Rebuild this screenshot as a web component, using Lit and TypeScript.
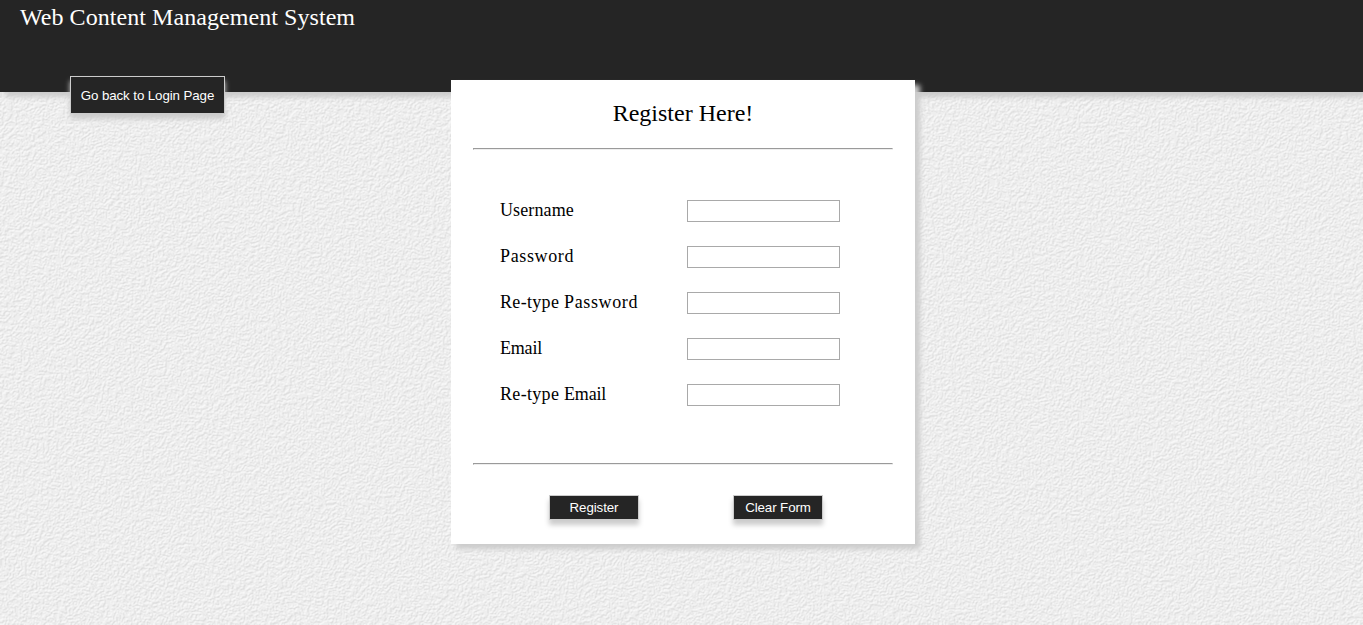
import { LitElement, html, css, nothing } from "lit";
import { customElement } from "lit/decorators.js";

const FIELDS = [
  { prefix: "", name: "Username", kind: "username", type: "text" },
  { prefix: "", name: "Password", kind: "password", type: "password" },
  { prefix: "Re-type ", name: "Password", kind: "password", type: "password" },
  { prefix: "", name: "Email", kind: "email", type: "text" },
  { prefix: "Re-type ", name: "Email", kind: "email", type: "text" },
];

@customElement("app-root")
export class AppRoot extends LitElement {
  static styles = css`
    :host {
      display: block;
      position: relative;
      height: 100vh;
      overflow: hidden;
      background: #eeeeee;
      color: #000;
      font-family: "Liberation Serif", "Times New Roman", serif;
      font-size: 18px;
    }
    .paper {
      position: absolute;
      inset: 0;
      width: 100%;
      height: 100%;
    }
    .page {
      position: relative;
      display: flex;
      flex-direction: column;
    }
    header {
      box-sizing: border-box;
      height: 92px;
      padding: 4px 20px 0;
      background: #252525;
      box-shadow: 5px 5px 5px #ccc;
      display: flex;
      flex-direction: column;
      align-items: flex-start;
    }
    h1, h2 {
      margin: 0;
      font-weight: normal;
      font-size: 24px;
      line-height: 27px;
      white-space: nowrap;
    }
    h1 {
      color: #fff;
      letter-spacing: 0.06px;
    }
    button {
      box-sizing: border-box;
      margin: 0;
      padding: 0;
      border: 1px solid #ccc;
      border-radius: 0;
      background: #252525;
      color: #fff;
      font-family: "Liberation Sans", Arial, sans-serif;
      font-size: 13.333px;
      letter-spacing: -0.1px;
      white-space: nowrap;
      width: 90px;
      height: 25px;
      box-shadow: 0 5px 5px #ccc;
    }
    .back {
      width: 155px;
      height: 38px;
      flex: none;
      margin: 45px 0 0 50px;
    }
    .card {
      box-sizing: border-box;
      width: 464px;
      height: 464px;
      margin: -12px 0 0 451px;
      padding: 20px 22px 0;
      background: #fff;
      box-shadow: 5px 5px 5px #ccc;
      position: relative;
    }
    h2 { text-align: center; }
    hr {
      height: 0;
      margin: 21px 0 0;
      border: 1px solid;
      border-color: #9a9a9a #eee #eee #9a9a9a;
    }
    .fields {
      display: grid;
      grid-template-columns: 187px 153px;
      row-gap: 24px;
      padding: 50px 0 57px 27px;
    }
    .fields label {
      line-height: 20px;
      height: 22px;
      white-space: pre;
      letter-spacing: 0.12px;
    }
    .prefix { letter-spacing: 0.32px; }
    .password { letter-spacing: 0.63px; }
    .email { letter-spacing: -0.2px; }
    .fields input {
      box-sizing: border-box;
      width: 153px;
      height: 22px;
      margin: 0;
      padding: 1px 2px;
      border: 1px solid #a9a9a9;
      border-radius: 0;
      background: #fff;
      outline: none;
    }
    .fields + hr { margin: 0; }
    .actions {
      display: flex;
      gap: 94px;
      padding: 30px 0 0 76px;
    }
  `;

  private reset() {
    this.renderRoot.querySelectorAll("input").forEach((i) => (i.value = ""));
  }

  render() {
    return html`
      <svg class="paper" aria-hidden="true">
        <filter id="grain" x="0" y="0" width="100%" height="100%" color-interpolation-filters="sRGB">
          <feTurbulence type="fractalNoise" baseFrequency="0.09" numOctaves="4" seed="7" />
          <feComponentTransfer>
            <feFuncA type="discrete" tableValues="0 1 0 1 0 1 0 1 0 1" />
          </feComponentTransfer>
          <feDiffuseLighting surfaceScale="0.13" diffuseConstant="0.992" lighting-color="#ffffff">
            <feDistantLight azimuth="235" elevation="70" />
          </feDiffuseLighting>
        </filter>
        <rect width="100%" height="100%" filter="url(#grain)" />
      </svg>
      <div class="page">
        <header>
          <h1>Web Content Management System</h1>
          <button class="back">Go back to Login Page</button>
        </header>
        <section class="card">
          <h2>Register Here!</h2>
          <hr />
          <div class="fields">
            ${FIELDS.map(
              (f, i) => html`<label for="f${i}">${f.prefix
                ? html`<span class="prefix">${f.prefix}</span>`
                : nothing}<span class=${f.kind}>${f.name}</span></label><input id="f${i}" type=${f.type} />`
            )}
          </div>
          <hr />
          <div class="actions">
            <button>Register</button>
            <button @click=${this.reset}>Clear Form</button>
          </div>
        </section>
      </div>
    `;
  }
}
